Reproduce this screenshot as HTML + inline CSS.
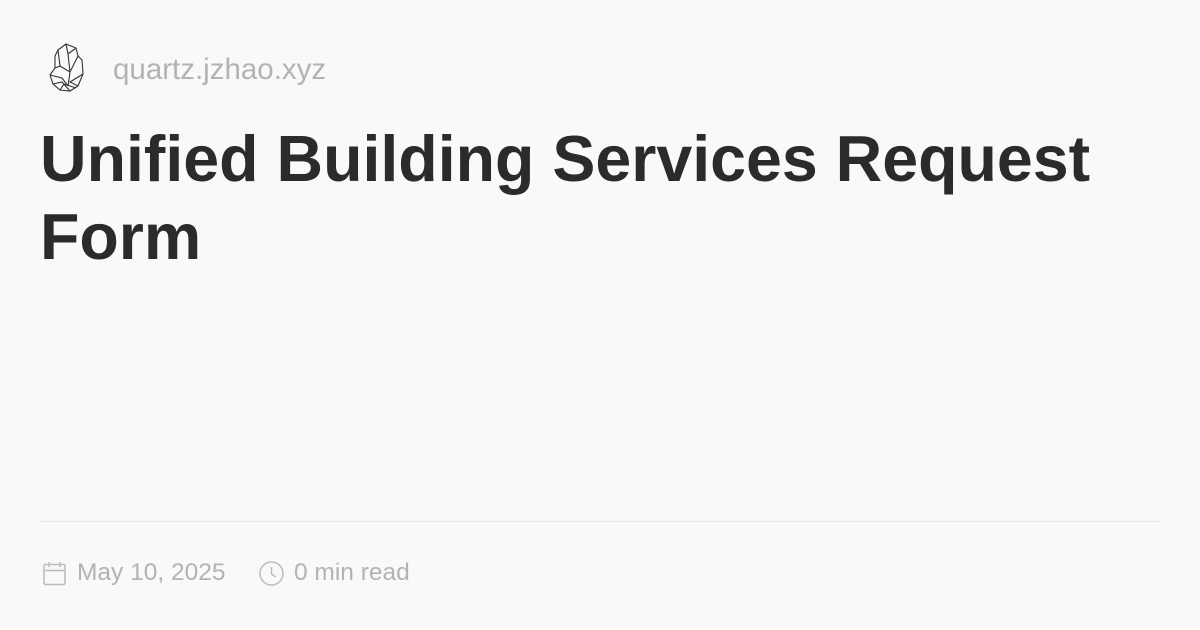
<!DOCTYPE html>
<html><head><meta charset="utf-8"><style>
body{margin:0;width:1200px;height:630px;background:#faf8f8;font-family:"Liberation Sans",sans-serif;position:relative;overflow:hidden}
.site{position:absolute;left:113px;top:53px;font-size:29.5px;color:#b3b3b3}
h1{position:absolute;left:40px;top:120px;margin:0;font-size:64.5px;line-height:78px;font-weight:bold;color:#2b2b2b;width:1120px}
.hr{position:absolute;left:40px;right:40px;top:521px;height:1px;background:#e8e6e6}
.meta{position:absolute;top:559px;font-size:24.5px;color:#b3b3b3}
</style></head><body>
<svg style="position:absolute;left:48px;top:42px" width="40" height="52" viewBox="0 0 40 52" fill="none" stroke="#333" stroke-width="1.1">
<path d="M10 8 L18 2 L28 6 L30 14 L34 18 L35 32 L30 44 L22 49 L12 48 L5 42 L2 33 L7 26 L7 14 Z"/>
<path d="M18 2 L20 12 L28 6 M20 12 L22 30 L30 14 M10 8 L12 24 L7 26 M12 24 L22 30 L20 44 M2 33 L14 36 L20 44 M5 42 L14 40 L22 49 M30 44 L22 40 L35 32 M12 48 L16 42 L28 46"/>
</svg>
<div class="site">quartz.jzhao.xyz</div>
<h1>Unified Building Services Request Form</h1>
<div class="hr"></div>
<svg style="position:absolute;left:43px;top:561px" width="23" height="25" viewBox="0 0 23 25" fill="none" stroke="#bbb" stroke-width="1.5"><rect x="1" y="3.5" width="21" height="20" rx="1.5"/><path d="M1 9.5H22M6 1v5M17 1v5"/></svg>
<div class="meta" style="left:77px">May 10, 2025</div>
<svg style="position:absolute;left:259px;top:561px" width="25" height="25" viewBox="0 0 25 25" fill="none" stroke="#bbb" stroke-width="1.5"><circle cx="12.5" cy="12.5" r="11.5"/><path d="M12.5 6v7l4 3"/></svg>
<div class="meta" style="left:294px">0 min read</div>
</body></html>
